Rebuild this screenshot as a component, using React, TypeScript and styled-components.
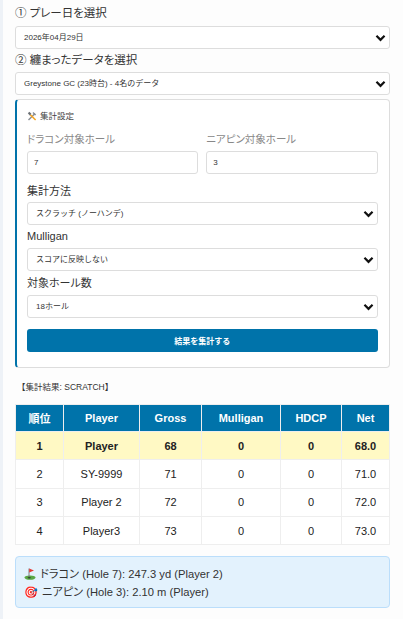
import React from "react";
import styled, { createGlobalStyle } from "styled-components";

const FONT = `"Liberation Sans", "Noto Sans CJK JP", sans-serif`;
const CHEVRON = `url("data:image/svg+xml,%3Csvg xmlns='http://www.w3.org/2000/svg' width='12' height='8' viewBox='0 0 12 8'%3E%3Cpath d='M1.6 1.6 6 6l4.4-4.4' fill='none' stroke='%23111' stroke-width='2.4'/%3E%3C/svg%3E")`;

const Global = createGlobalStyle`
  html, body { margin: 0; padding: 0; background: #eef2f7; }
  body { font-family: ${FONT}; color: #333; }
  * { box-sizing: border-box; }
`;

const Page = styled.div`
  margin-left: 3px;
  height: 619px;
  overflow: hidden;
  background: #fdfdfd;
  padding: 6px 13.5px 0 12px;
`;

const StepLabel = styled.label<{ $gap?: number }>`
  display: block;
  font-size: 11.5px;
  line-height: 15px;
  margin: 0 0 ${(p) => p.$gap ?? 5}px;
  color: #333;
  font-feature-settings: "palt";
`;

const FieldLabel = styled.label<{ $muted?: boolean; $gap?: number }>`
  display: block;
  font-size: ${(p) => (p.$muted ? 10.5 : 11)}px;
  line-height: 14px;
  margin: 0 0 ${(p) => p.$gap ?? 5}px;
  color: ${(p) => (p.$muted ? "#888" : "#333")};
  font-feature-settings: "palt";
`;

const Select = styled.select<{ $tail?: number }>`
  display: block;
  width: 100%;
  height: 23px;
  margin: 0 0 ${(p) => p.$tail ?? 4}px;
  padding: 0 14px 0 8px;
  appearance: none;
  border: 1px solid #ddd;
  border-radius: 3px;
  background: #fff ${CHEVRON} no-repeat right 2.5px center / 11px 8px;
  font-family: ${FONT};
  font-size: 8px;
  color: #333;
`;

const Panel = styled.section`
  margin-top: 4px;
  height: 268.5px;
  padding: 10px 11px 0 10px;
  background: #fff;
  border: 1px solid #ddd;
  border-left: 2.5px solid #0073aa;
  border-radius: 4px;
`;

const PanelTitle = styled.div`
  display: flex;
  align-items: center;
  gap: 3px;
  font-size: 8.5px;
  line-height: 12px;
  margin-bottom: 10px;
  color: #444;
`;

const TwoCols = styled.div`
  display: grid;
  grid-template-columns: 1fr 1fr;
  gap: 8px;
  margin-bottom: 10px;
`;

const Input = styled.input`
  display: block;
  width: 100%;
  height: 23px;
  padding: 0 6px;
  border: 1px solid #ddd;
  border-radius: 3px;
  background: #fff;
  font-family: ${FONT};
  font-size: 8px;
  color: #333;
`;

const SubmitButton = styled.button`
  display: block;
  width: 100%;
  height: 23px;
  margin-top: 11px;
  border: 0;
  border-radius: 3px;
  background: #0073aa;
  color: #fff;
  font-family: ${FONT};
  font-size: 8px;
  font-weight: 700;
`;

const ResultTitle = styled.div`
  font-size: 8.5px;
  line-height: 12px;
  margin: 13px 0 0 2px;
  color: #333;
`;

const Table = styled.table`
  width: 374px;
  margin: 11px 0 0;
  border-collapse: collapse;
  table-layout: fixed;
  font-size: 11px;
  background: #fff;
`;

const Th = styled.th`
  height: 27.5px;
  padding: 0;
  background: #0073aa;
  color: #fff;
  border: 1px solid #eee;
  font-weight: 700;
`;

const Td = styled.td<{ $top?: boolean }>`
  height: 28.3px;
  padding: 0;
  text-align: center;
  border: 1px solid #eee;
  color: #222;
  font-weight: ${(p) => (p.$top ? 700 : 400)};
  background: ${(p) => (p.$top ? "#fff9c4" : "#fff")};
`;

const InfoBox = styled.div`
  margin-top: 11px;
  padding: 7.5px 8px;
  height: 51.5px;
  background: #e3f2fd;
  border: 1px solid #bbdefb;
  border-radius: 4px;
  font-size: 11.2px;
  line-height: 18px;
  color: #333;
  font-feature-settings: "palt";
`;

const InfoLine = styled.div`
  display: flex;
  align-items: center;
  gap: 4px;
`;

const ToolsIcon = () => (
  <svg width="10" height="10" viewBox="0 0 10 10">
    <path d="M1.5 9 8 2.5" stroke="#8a8f94" strokeWidth="1.4" />
    <path d="M6.4 1 9.2 3.8 8 4.6 5.5 2.1Z" fill="#8a8f94" />
    <path d="M8.6 9 3.2 3.6" stroke="#f5a623" strokeWidth="1.5" />
    <path d="M.8 2.2 2.4.8 4.4 2.8 2.8 4.4Z" fill="#6b7075" />
  </svg>
);

const FlagIcon = () => (
  <svg width="12" height="12" viewBox="0 0 12 12">
    <ellipse cx="6" cy="9.6" rx="5.6" ry="2.2" fill="#5aa845" />
    <ellipse cx="5.2" cy="9.8" rx="1.6" ry=".7" fill="#2c3a2c" />
    <path d="M5 .5v9" stroke="#666" strokeWidth=".8" />
    <path d="M5.2.5 10 2.6 5.2 4.6Z" fill="#e53935" />
  </svg>
);

const cols = [48, 76, 62, 79, 61, 48];
const headers = ["順位", "Player", "Gross", "Mulligan", "HDCP", "Net"];
const rows = [
  ["1", "Player", "68", "0", "0", "68.0"],
  ["2", "SY-9999", "71", "0", "0", "71.0"],
  ["3", "Player 2", "72", "0", "0", "72.0"],
  ["4", "Player3", "73", "0", "0", "73.0"],
];

export default function App() {
  return (
    <Page>
      <Global />
      <StepLabel>① プレー日を選択</StepLabel>
      <Select><option>2026年04月29日</option></Select>
      <StepLabel $gap={4}>② 纏まったデータを選択</StepLabel>
      <Select $tail={0}><option>Greystone GC (23時台) - 4名のデータ</option></Select>
      <Panel>
        <PanelTitle><ToolsIcon /><span>集計設定</span></PanelTitle>
        <TwoCols>
          <div>
            <FieldLabel $muted>ドラコン対象ホール</FieldLabel>
            <Input defaultValue="7" />
          </div>
          <div>
            <FieldLabel $muted>ニアピン対象ホール</FieldLabel>
            <Input defaultValue="3" />
          </div>
        </TwoCols>
        <FieldLabel $gap={4}>集計方法</FieldLabel>
        <Select><option>スクラッチ (ノーハンデ)</option></Select>
        <FieldLabel>Mulligan</FieldLabel>
        <Select $tail={5}><option>スコアに反映しない</option></Select>
        <FieldLabel>対象ホール数</FieldLabel>
        <Select $tail={0}><option>18ホール</option></Select>
        <SubmitButton>結果を集計する</SubmitButton>
      </Panel>
      <ResultTitle>【集計結果: SCRATCH】</ResultTitle>
      <Table>
        <colgroup>
          {cols.map((w, i) => <col key={i} style={{ width: w }} />)}
        </colgroup>
        <thead>
          <tr>{headers.map((h) => <Th key={h}>{h}</Th>)}</tr>
        </thead>
        <tbody>
          {rows.map((r, i) => (
            <tr key={i}>
              {r.map((c, j) => <Td key={j} $top={i === 0}>{c}</Td>)}
            </tr>
          ))}
        </tbody>
      </Table>
      <InfoBox>
        <InfoLine><FlagIcon /><span>ドラコン (Hole 7): 247.3 yd (Player 2)</span></InfoLine>
        <InfoLine><span>🎯</span><span>ニアピン (Hole 3): 2.10 m (Player)</span></InfoLine>
      </InfoBox>
    </Page>
  );
}
